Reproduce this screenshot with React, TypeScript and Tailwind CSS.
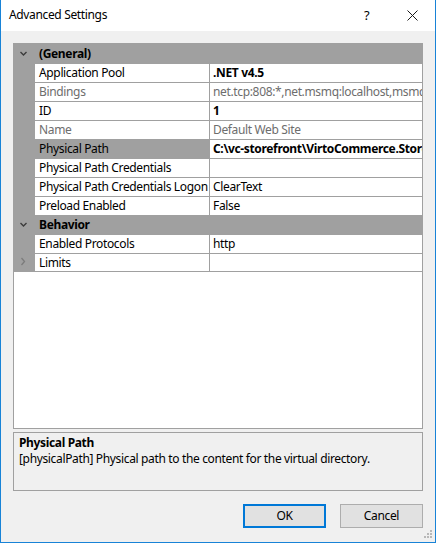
import React from 'react';

type Row = {
  name: string;
  value?: string;
  bold?: boolean;
  dim?: boolean;
  selected?: boolean;
  collapsed?: boolean;
  last?: boolean;
};

const general: Row[] = [
  { name: 'Application Pool', value: '.NET v4.5', bold: true },
  { name: 'Bindings', value: 'net.tcp:808:*,net.msmq:localhost,msmq.formatname:localhost,net.pipe:*', dim: true },
  { name: 'ID', value: '1', bold: true },
  { name: 'Name', value: 'Default Web Site', dim: true },
  { name: 'Physical Path', value: 'C:\\vc-storefront\\VirtoCommerce.Storefront', bold: true, selected: true },
  { name: 'Physical Path Credentials', value: '' },
  { name: 'Physical Path Credentials Logon', value: 'ClearText' },
  { name: 'Preload Enabled', value: 'False' },
];

const behavior: Row[] = [
  { name: 'Enabled Protocols', value: 'http' },
  { name: 'Limits', value: '', collapsed: true, last: true },
];

function ChevronDown() {
  return (
    <svg width="21" height="19" viewBox="0 0 21 19">
      <polyline points="6.5,8 9.5,11 12.5,8" fill="none" stroke="#3c3c3c" strokeWidth="1.4" />
    </svg>
  );
}

function ChevronRight() {
  return (
    <svg width="21" height="18" viewBox="0 0 21 18">
      <polyline points="7.5,5 10.5,8.5 7.5,12" fill="none" stroke="#7c7c7c" strokeWidth="1.3" />
    </svg>
  );
}

function Category({ label }: { label: string }) {
  return (
    <div className="flex h-[19px] bg-[#a0a0a0] shrink-0">
      <div className="w-[21px] shrink-0">
        <ChevronDown />
      </div>
      <div className="pl-[4px] font-bold leading-[19px] text-black">{label}</div>
    </div>
  );
}

function PropRow({ row }: { row: Row }) {
  const color = row.dim ? 'text-[#6d6d6d]' : 'text-black';
  return (
    <div className="flex h-[19px] shrink-0">
      <div className="w-[21px] shrink-0 bg-[#a0a0a0]">{row.collapsed && <ChevronRight />}</div>
      <div className={`flex flex-1 min-w-0 border-t border-[#a0a0a0] ${row.last ? 'h-[19px] border-b' : ''}`}>
        <div
          className={`w-[175px] shrink-0 border-r border-[#a0a0a0] pl-[4px] leading-[18px] whitespace-nowrap overflow-hidden ${color} ${
            row.selected ? 'bg-[#a0a0a0]' : 'bg-white'
          }`}
        >
          {row.name}
        </div>
        <div
          className={`flex-1 min-w-0 pl-[3px] leading-[18px] whitespace-nowrap overflow-hidden ${color} ${
            row.bold ? 'font-bold' : ''
          }`}
        >
          {row.value}
        </div>
      </div>
    </div>
  );
}

export default function App() {
  return (
    <div className="relative flex flex-col w-[436px] h-[543px] bg-[#f0f0f0] border-x border-b border-[#1883d7] font-['Noto_Sans',sans-serif] text-[12px] tracking-[-0.35px] text-black">
      {/* Title bar */}
      <div className="flex items-center h-[31px] bg-white shrink-0">
        <div className="pl-[8px] flex-1 leading-[16px] pb-[1px]">Advanced Settings</div>
        <div className="w-[10px] text-[13px] leading-[16px] mr-[33px] pb-[1px]">?</div>
        <svg width="11" height="11" viewBox="0 0 11 11" className="mr-[17px] mb-[1px]">
          <path d="M0.5 0.5 L10.5 10.5 M10.5 0.5 L0.5 10.5" stroke="#1a1a1a" strokeWidth="1" />
        </svg>
      </div>

      <div className="flex flex-col flex-1 px-[12px] pt-[12px]">
        {/* Property grid */}
        <div className="flex flex-col h-[386px] border border-[#a0a0a0] bg-white overflow-hidden">
          <Category label="(General)" />
          {general.map((r) => (
            <PropRow key={r.name} row={r} />
          ))}
          <Category label="Behavior" />
          {behavior.map((r) => (
            <PropRow key={r.name} row={r} />
          ))}
        </div>

        {/* Description */}
        <div className="mt-[3px] h-[59px] border border-[#a0a0a0] pl-[5px] pt-[2px] leading-[16px]">
          <div className="font-bold">Physical Path</div>
          <div>[physicalPath] Physical path to the content for the virtual directory.</div>
        </div>

        {/* Buttons */}
        <div className="flex justify-end gap-[14px] mt-[13px]">
          <button className="w-[83px] h-[24px] bg-[#e1e1e1] border-2 border-[#0078d7] leading-[16px]">OK</button>
          <button className="w-[83px] h-[24px] bg-[#e1e1e1] border border-[#adadad] leading-[16px]">Cancel</button>
        </div>
      </div>

      {/* Resize grip */}
      <svg width="10" height="10" viewBox="0 0 10 10" className="absolute right-[2px] bottom-[3px]">
        <rect x="7" y="1" width="2" height="2" fill="#b8b8b8" />
        <rect x="4" y="4" width="2" height="2" fill="#b8b8b8" />
        <rect x="7" y="4" width="2" height="2" fill="#b8b8b8" />
        <rect x="1" y="7" width="2" height="2" fill="#b8b8b8" />
        <rect x="4" y="7" width="2" height="2" fill="#b8b8b8" />
        <rect x="7" y="7" width="2" height="2" fill="#b8b8b8" />
      </svg>
    </div>
  );
}
